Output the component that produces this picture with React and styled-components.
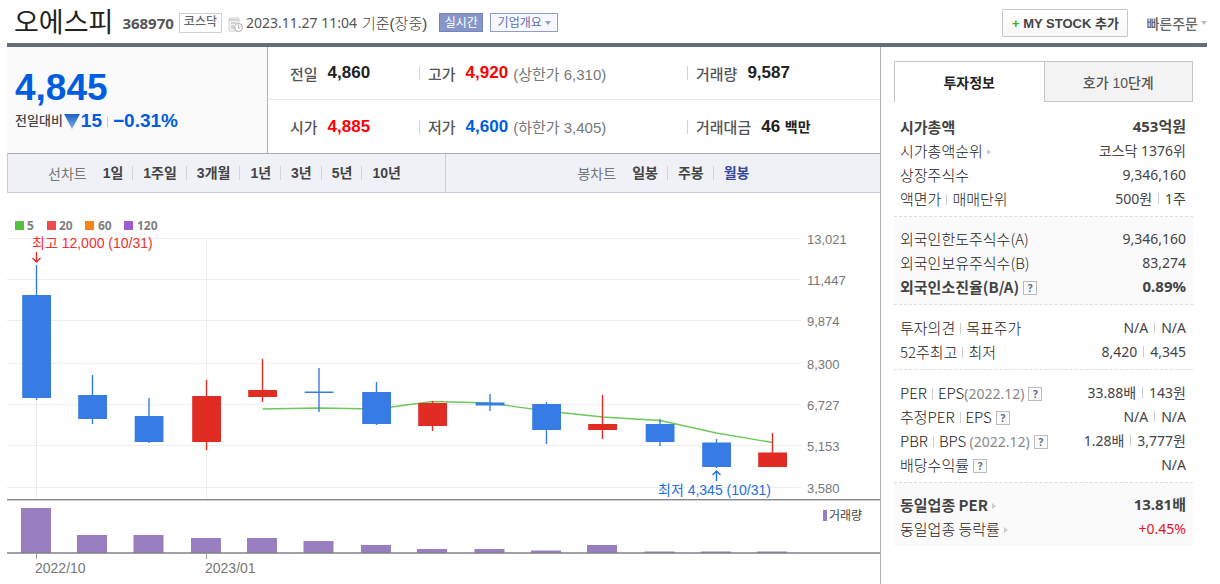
import React from 'react'
import styled, { createGlobalStyle } from 'styled-components'

const sansKr = '"Liberation Sans", "Noto Sans CJK KR", sans-serif'
const textKr = '"Noto Sans", "Noto Sans CJK KR", sans-serif'

const periods = ['1일', '1주일', '3개월', '1년', '3년', '5년', '10년']
const candleTypes = ['일봉', '주봉', '월봉']

// x, high, body top, body bottom, low, rising, volume bar top
const candles = [
    [36.5, 265, 295, 398, 400, false, 508],
    [92.5, 375, 395, 419, 424, false, 535],
    [149, 398, 416, 442, 443, false, 535],
    [206.5, 380, 396, 442, 450, true, 538],
    [262.5, 359, 390, 397, 402, true, 538],
    [319, 368, 391.5, 393, 412, false, 541],
    [376.5, 382, 392, 424, 425, false, 545],
    [432.5, 401, 403, 426, 431, true, 549],
    [490, 394, 402.5, 405.5, 411, false, 549],
    [546.5, 402, 404, 430, 444, false, 550.5],
    [602.5, 395, 424, 430, 439, true, 545],
    [660, 419, 424, 442, 446, false, 551.5],
    [716.5, 439, 442.5, 467, 468, false, 551.5],
    [772.5, 433, 452.5, 467, 467, true, 551.5],
]

const average = '262.5,409 319,408 376.5,409 432.5,401.5 490,403 546.5,411 602.5,417 660,420.5 716.5,433 772.5,442.5'

const priceAxis = [
    [239, '13,021'],
    [280, '11,447'],
    [321, '9,874'],
    [364, '8,300'],
    [405, '6,727'],
    [446, '5,153'],
    [488, '3,580'],
]

const legend = [
    [15, 27, '5', '#58c042'],
    [47, 59, '20', '#f04b4b'],
    [85, 98, '60', '#f58518'],
    [124, 137, '120', '#a05ccd'],
]

const Chart = () => (
    <ChartSvg viewBox="7 193 873 391" role="img" aria-label="월봉 차트">
        {legend.map(([x, textX, label, color]) => (
            <g key={label}>
                <rect x={x} y="221" width="9" height="9" fill={color} />
                <LegendText x={textX} y="230">{label}</LegendText>
            </g>
        ))}
        {priceAxis.map(([y, label]) => (
            <g key={label}>
                <line x1="7" x2="801" y1={y - 0.5} y2={y - 0.5} stroke="#eeeeee" />
                <AxisText x="807" y={y + 5} $size={13}>{label}</AxisText>
            </g>
        ))}
        <path d="M36.5 265V499M206.5 239V499" stroke="#eeeeee" />
        <polyline points={average} fill="none" stroke="#6cc95a" strokeWidth="1.3" />
        {candles.map(([x, high, top, bottom, low, up]) => (
            <g key={x} fill={up ? '#e02c23' : '#377ce4'}>
                <rect x={x - 0.7} y={high} width="1.4" height={low - high} />
                <rect x={x - 14.3} y={top} width="28.8" height={bottom - top} />
            </g>
        ))}
        <NoteText x="32" y="248" $color="#f3302b">최고 12,000 (10/31)</NoteText>
        <path d="M36.5 252V262M32.5 258L36.5 262L40.5 258" fill="none" stroke="#e02c23" strokeWidth="1.4" />
        <path d="M716.5 481V471M712.5 475L716.5 471L720.5 475" fill="none" stroke="#2470dc" strokeWidth="1.4" />
        <NoteText x="658" y="495" $color="#2470dc">최저 4,345 (10/31)</NoteText>
        <line x1="7" x2="880" y1="499.5" y2="499.5" stroke="#85858b" />
        <line x1="7" x2="880" y1="500.5" y2="500.5" stroke="#cfcfd3" />
        {candles.map(([x, , , , , , top]) => (
            <rect key={x} x={x - 15.5} y={top} width="30" height={553 - top} fill="#977fc1" />
        ))}
        <line x1="7" x2="880" y1="553" y2="553" stroke="#808087" strokeWidth="1.4" />
        <path d="M36.5 554V559M206.5 554V559" stroke="#999999" />
        <AxisText x="35" y="573" $size={14}>2022/10</AxisText>
        <AxisText x="205" y="573" $size={14}>2023/01</AxisText>
        <rect x="823" y="510" width="4" height="11" fill="#977fc1" />
        <VolumeText x="829" y="520">거래량</VolumeText>
    </ChartSvg>
)

const Help = () => <HelpButton type="button" aria-label="도움말">?</HelpButton>

const Row = ({ label, value, bold, color }) => (
    <InfoRow $bold={bold}>
        <th scope="row">{label}</th>
        <InfoValue $color={color} $bold={bold}>{value}</InfoValue>
    </InfoRow>
)

const Header = () => (
    <HeaderWrap>
        <Title>오에스피</Title>
        <Code>368970</Code>
        <Market>코스닥</Market>
        <ClockIcon viewBox="0 0 15 15" aria-hidden="true">
            <path d="M1 1H11V14H1Z" fill="#f4f4f4" stroke="#d0d0d0" />
            <path d="M1 3H11M3 6H9M3 9H6M3 11H6" stroke="#c8c8c8" strokeWidth="1.5" />
            <circle cx="10.5" cy="10.5" r="3.8" fill="#ffffff" stroke="#c0c0c0" strokeWidth="1.3" />
            <path d="M10.5 8V11H12.5" fill="none" stroke="#b0b0b0" />
        </ClockIcon>
        <DateText>2023.11.27 11:04</DateText>
        <Basis>기준(장중)</Basis>
        <Realtime type="button">실시간</Realtime>
        <Overview type="button">기업개요<DownMark $color="#8f9ccd" /></Overview>
        <HeaderRight>
            <MyStock type="button"><b>+</b> MY STOCK 추가</MyStock>
            <QuickOrder type="button">빠른주문<DownMark $color="#bbbbbb" /></QuickOrder>
        </HeaderRight>
    </HeaderWrap>
)

const Summary = () => (
    <SummaryWrap>
        <PriceBox>
            <Price>4,845</Price>
            <Change>
                <ChangeLabel>전일대비</ChangeLabel>
                <Triangle viewBox="0 0 16 15" aria-label="하락">
                    <defs>
                        <linearGradient id="fall" x1="0" y1="0" x2="0" y2="1">
                            <stop offset="0" stopColor="#1d5fbd" />
                            <stop offset="1" stopColor="#7eb0ee" />
                        </linearGradient>
                    </defs>
                    <path d="M0 0H16L8 15Z" fill="url(#fall)" />
                </Triangle>
                <span>15</span>
                <Divider $gap={5} />
                <span>−0.31%</span>
            </Change>
        </PriceBox>
        <Quotes>
            <Quote><dt>전일</dt><dd>4,860</dd></Quote>
            <Quote $line $color="#ff0000"><dt>고가</dt><dd>4,920</dd><Limit>(상한가 6,310)</Limit></Quote>
            <Quote $line><dt>거래량</dt><dd>9,587</dd></Quote>
            <Quote $color="#ff0000"><dt>시가</dt><dd>4,885</dd></Quote>
            <Quote $line $color="#005de0"><dt>저가</dt><dd>4,600</dd><Limit>(하한가 3,405)</Limit></Quote>
            <Quote $line><dt>거래대금</dt><dd>46 <small>백만</small></dd></Quote>
        </Quotes>
    </SummaryWrap>
)

const ChartMenu = () => (
    <MenuWrap>
        <MenuGroup $left={40}>
            <MenuLabel>선차트</MenuLabel>
            {periods.map(p => <MenuItem key={p} type="button">{p}</MenuItem>)}
        </MenuGroup>
        <MenuGroup $left={131}>
            <MenuLabel>봉차트</MenuLabel>
            {candleTypes.map(c => (
                <MenuItem key={c} type="button" $active={c === '월봉'}>{c}</MenuItem>
            ))}
        </MenuGroup>
    </MenuWrap>
)

const Aside = () => (
    <AsideWrap>
        <Tabs role="tablist">
            <Tab type="button" role="tab" aria-selected="true" $active>투자정보</Tab>
            <Tab type="button" role="tab" aria-selected="false">호가 10단계</Tab>
        </Tabs>
        <Group $first>
            <InfoTable><tbody>
                <Row bold label="시가총액" value="453억원" />
                <Row label={<a href="#rank">시가총액순위<RightMark /></a>} value="코스닥 1376위" />
                <Row label="상장주식수" value="9,346,160" />
                <Row label={<>액면가<Divider $gap={5} />매매단위</>} value={<>500원<Divider $gap={6} />1주</>} />
            </tbody></InfoTable>
        </Group>
        <Group $shaded>
            <InfoTable><tbody>
                <Row label="외국인한도주식수(A)" value="9,346,160" />
                <Row label="외국인보유주식수(B)" value="83,274" />
                <Row bold label={<>외국인소진율(B/A)<Help /></>} value="0.89%" />
            </tbody></InfoTable>
        </Group>
        <Group>
            <InfoTable><tbody>
                <Row label={<>투자의견<Divider $gap={5} />목표주가</>} value={<>N/A<Divider $gap={6} />N/A</>} />
                <Row label={<>52주최고<Divider $gap={5} />최저</>} value={<>8,420<Divider $gap={6} />4,345</>} />
            </tbody></InfoTable>
        </Group>
        <Group>
            <InfoTable><tbody>
                <Row label={<>PER<Divider $gap={5} />EPS<Term>(2022.12)</Term><Help /></>} value={<>33.88배<Divider $gap={6} />143원</>} />
                <Row label={<>추정PER<Divider $gap={5} />EPS<Help /></>} value={<>N/A<Divider $gap={6} />N/A</>} />
                <Row label={<>PBR<Divider $gap={5} />BPS <Term>(2022.12)</Term><Help /></>} value={<>1.28배<Divider $gap={6} />3,777원</>} />
                <Row label={<>배당수익률<Help /></>} value="N/A" />
            </tbody></InfoTable>
        </Group>
        <Group $shaded $last>
            <InfoTable><tbody>
                <Row bold label={<a href="#sector-per">동일업종 PER<RightMark /></a>} value="13.81배" />
                <Row label={<a href="#sector">동일업종 등락률<RightMark /></a>} value="+0.45%" color="#e8141b" />
            </tbody></InfoTable>
        </Group>
    </AsideWrap>
)

export default function App() {
    return (
        <Page>
            <GlobalStyle />
            <Header />
            <Content>
                <Main>
                    <Summary />
                    <ChartMenu />
                    <Chart />
                </Main>
                <Aside />
            </Content>
        </Page>
    )
}

const GlobalStyle = createGlobalStyle`
* {
    box-sizing: border-box;
}
body {
    margin: 0;
    background: #fff;
    color: #444;
    font-family: ${sansKr};
}
button {
    margin: 0;
    padding: 0;
    border: 0;
    background: none;
    font-family: inherit;
    white-space: nowrap;
    cursor: pointer;
}
a {
    color: inherit;
    text-decoration: none;
}
`

const Page = styled.div`
padding: 0 13px 0 7px;
`

const HeaderWrap = styled.header`
display: flex;
align-items: center;
height: 47px;
padding: 2px 0 0 7px;
border-bottom: 4px solid #656d78;
white-space: nowrap;
`

const Title = styled.h1`
margin: 0;
color: #222;
font-size: 27px;
font-weight: 400;
line-height: 40px;
`

const Code = styled.span`
margin-left: 9px;
color: #555;
font-family: ${textKr};
font-size: 15px;
font-weight: 700;
`

const Market = styled.span`
height: 20px;
margin-left: 5px;
padding: 0 4px;
border: 1px solid #d0d0d0;
color: #666;
font-size: 12px;
font-weight: 500;
line-height: 17px;
`

const ClockIcon = styled.svg`
width: 15px;
height: 15px;
margin: 4px 3px 0 6px;
`

const DateText = styled.time`
color: #555;
font-family: ${textKr};
font-size: 14px;
`

const Basis = styled.span`
margin-left: 5px;
color: #444;
font-size: 15px;
font-weight: 300;
`

const Realtime = styled.button`
width: 44px;
height: 19px;
margin-left: 12px;
border: 1px solid #7383bd;
background: #8796c8;
color: #fff;
font-size: 12px;
line-height: 16px;
`

const Overview = styled.button`
display: flex;
align-items: center;
justify-content: center;
width: 68px;
height: 19px;
margin-left: 7px;
border: 1px solid #8f9ccd;
background: #f7f8fd;
color: #5e6fb0;
font-size: 12px;
line-height: 16px;
`

const DownMark = styled.i`
margin-left: 3px;
border: 3px solid transparent;
border-top: 4px solid ${props => props.$color};
border-bottom: 0;
`

const HeaderRight = styled.div`
display: flex;
align-items: center;
margin-left: auto;
`

const MyStock = styled.button`
width: 126px;
height: 28px;
border: 1px solid #c8c8c8;
border-radius: 1px;
background: linear-gradient(#fff, #f7f7f7);
color: #444;
font-size: 13px;
font-weight: 700;
b {
    color: #3db312;
}
`

const QuickOrder = styled.button`
display: flex;
align-items: center;
margin-left: 18px;
color: #666;
font-size: 14px;
font-weight: 500;
`

const Content = styled.div`
display: flex;
`

const Main = styled.main`
flex: 1;
min-width: 0;
border-right: 1px solid #b0b0b0;
`

const SummaryWrap = styled.section`
display: flex;
height: 106px;
`

const PriceBox = styled.div`
flex: none;
width: 261px;
padding: 20px 0 0 8px;
border-right: 1px solid #b3b3b3;
background: #fafafa;
`

const Price = styled.strong`
display: block;
color: #005de0;
font-size: 37px;
line-height: 42px;
`

const Change = styled.div`
display: flex;
align-items: center;
color: #005de0;
font-size: 19px;
font-weight: 700;
line-height: 24px;
`

const ChangeLabel = styled.span`
color: #444;
font-size: 13px;
font-weight: 500;
`

const Triangle = styled.svg`
width: 16px;
height: 15px;
margin: 0 1px;
`

const Divider = styled.i`
display: inline-block;
width: 1px;
height: 11px;
margin: 0 ${props => props.$gap}px;
background: #ccc;
`

const Quotes = styled.dl`
flex: 1;
display: grid;
grid-template-columns: 151fr 268fr 193fr;
grid-template-rows: 53px 53px;
margin: 0;
`

const Quote = styled.div`
display: flex;
align-items: center;
padding-left: ${props => props.$line ? 0 : 22}px;
white-space: nowrap;
&:nth-child(-n+3) {
    border-bottom: 1px solid #e9e9e9;
}
&::before {
    content: '';
    display: ${props => props.$line ? 'block' : 'none'};
    width: 1px;
    height: 14px;
    margin-right: 8px;
    background: #d5d5d5;
}
dt {
    color: #555;
    font-size: 15px;
    font-weight: 500;
}
dd {
    margin: 0 0 0 10px;
    color: ${props => props.$color || '#222'};
    font-size: 17px;
    font-weight: 700;
}
small {
    font-size: 14px;
}
`

const Limit = styled.span`
margin-left: 5px;
color: #777;
font-size: 15px;
`

const MenuWrap = styled.nav`
display: grid;
grid-template-columns: 438fr 435fr;
height: 40px;
border: 1px solid #c9cad3;
border-width: 1px 0 1px 1px;
border-top-color: #a9abbc;
background: #f0f1f6;
`

const MenuGroup = styled.div`
display: flex;
align-items: center;
padding-left: ${props => props.$left}px;
& + & {
    border-left: 1px solid #c9cad3;
}
`

const MenuLabel = styled.span`
margin-right: 6px;
color: #777;
font-size: 14px;
`

const MenuItem = styled.button`
padding: 0 9px 0 10px;
color: ${props => props.$active ? '#33499c' : '#444'};
font-size: 14px;
font-weight: 700;
line-height: 14px;
& + & {
    border-left: 1px solid #d3d4db;
}
`

const ChartSvg = styled.svg`
display: block;
width: 100%;
`

const LegendText = styled.text`
fill: #808080;
font-family: ${textKr};
font-size: 12px;
font-weight: 700;
`

const AxisText = styled.text`
fill: #777;
font-size: ${props => props.$size}px;
`

const NoteText = styled.text`
fill: ${props => props.$color};
font-size: 14px;
`

const VolumeText = styled.text`
fill: #444;
font-size: 12px;
`

const AsideWrap = styled.aside`
flex: none;
width: 326px;
padding: 14px 14px 0 13px;
`

const Tabs = styled.div`
display: grid;
grid-template-columns: 1fr 1fr;
height: 41px;
`

const Tab = styled.button`
border: 1px solid #c6c6c6;
border-width: ${props => props.$active ? '1px 0 0 1px' : '1px'};
background: ${props => props.$active ? '#fff' : '#f3f3f3'};
color: ${props => props.$active ? '#222' : '#555'};
font-size: 14px;
font-weight: ${props => props.$active ? 700 : 500};
`

const Group = styled.section`
padding: ${props => props.$first ? 12 : props.$shaded ? 9 : 10}px 7px 6px 6px;
border-bottom: ${props => props.$last ? 0 : '1px dashed #ddd'};
background: ${props => props.$shaded ? '#fafafa' : '#fff'};
`

const InfoTable = styled.table`
width: 100%;
border-collapse: collapse;
`

const InfoRow = styled.tr`
height: 24px;
white-space: nowrap;
th {
    padding: 0;
    color: ${props => props.$bold ? '#444' : '#222'};
    font-family: "Noto Sans CJK KR", sans-serif;
    font-size: 15px;
    font-weight: ${props => props.$bold ? 700 : 300};
    line-height: 23px;
    text-align: left;
}
`

const InfoValue = styled.td`
padding: 0;
color: ${props => props.$color || '#444'};
font-family: ${textKr};
font-size: ${props => props.$bold ? 15 : 14}px;
font-weight: ${props => props.$bold ? 700 : 400};
line-height: 23px;
text-align: right;
`

const Term = styled.span`
color: #888;
font-family: ${textKr};
font-size: 14px;
font-weight: 400;
line-height: 14px;
`

const RightMark = styled.i`
display: inline-block;
margin: 0 0 2px 4px;
border: 3px solid transparent;
border-left: 4px solid #ccc;
border-right: 0;
`

const HelpButton = styled.button`
width: 14px;
height: 14px;
margin-left: 4px;
border: 1px solid #bbb;
background: #fafafa;
color: #5c6b80;
font-family: ${textKr};
font-size: 10px;
font-weight: 700;
line-height: 11px;
vertical-align: middle;
`
